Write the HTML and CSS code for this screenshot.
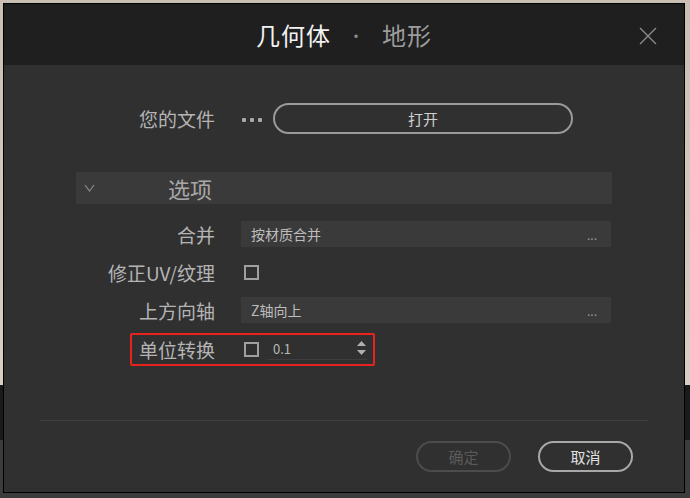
FILE: index.html
```html
<!DOCTYPE html>
<html lang="zh">
<head>
  <meta charset="UTF-8" />
  <title>几何体 · 地形</title>
  <link rel="stylesheet" href="styles.css">
</head>
<body>
  <div class="dialog">
    <div class="header">
      <div class="title">几何体<span class="dot">·</span><span class="sub">地形</span></div>
      <svg class="close" width="18" height="18" viewBox="0 0 18 18">
        <path d="M1 1 L17 17 M17 1 L1 17" stroke="#8a8a8a" stroke-width="1.4" fill="none"/>
      </svg>
    </div>

    <div class="content">
      <div class="row file-row">
        <div class="label">您的文件</div>
        <svg class="dots" width="20" height="6" viewBox="0 0 20 6">
          <rect x="0" y="1" width="4" height="4" rx="1" fill="#a8a8a8"/>
          <rect x="8" y="1" width="4" height="4" rx="1" fill="#a8a8a8"/>
          <rect x="16" y="1" width="4" height="4" rx="1" fill="#a8a8a8"/>
        </svg>
        <button class="pill open">打开</button>
      </div>

      <div class="section">
        <svg class="chev" width="11" height="8" viewBox="0 0 11 8">
          <polyline points="1,1 5.5,7 10,1" stroke="#8a8a8a" stroke-width="1.2" fill="none"/>
        </svg>
        <span class="section-title">选项</span>
      </div>

      <div class="row">
        <div class="label">合并</div>
        <div class="field">按材质合并<span class="more">...</span></div>
      </div>
      <div class="row">
        <div class="label">修正UV/纹理</div>
        <div class="check"></div>
      </div>
      <div class="row">
        <div class="label">上方向轴</div>
        <div class="field">Z轴向上<span class="more">...</span></div>
      </div>
      <div class="row marked">
        <div class="label">单位转换</div>
        <div class="check"></div>
        <div class="number">
          <span>0.1</span>
          <span class="spin">
            <svg width="9" height="15" viewBox="0 0 9 15">
              <polygon points="4.5,0 9,5 0,5" fill="#b0b0b0"/>
              <polygon points="0,9 9,9 4.5,14" fill="#b0b0b0"/>
            </svg>
          </span>
        </div>
      </div>
    </div>

    <div class="sep"></div>

    <div class="footer">
      <button class="pill ok">确定</button>
      <button class="pill cancel">取消</button>
    </div>
  </div>
</body>
</html>
```

FILE: styles.css
```css
*, *::after {
  box-sizing: border-box;
}
body {
  margin: 0;
  width: 690px;
  height: 498px;
  overflow: hidden;
  padding: 3px 0 0 3px;
  font-family: "Noto Sans CJK SC", "Noto Sans", sans-serif;
  background: linear-gradient(to bottom, #c9c0b3 0, #d8cfc2 385px, #1a1a1a 385px, #1a1a1a 440px, #3c3c3c 440px);
}
.dialog {
  width: 682px;
  height: 490px;
  border: 1px solid #000;
  background: #303030;
  display: flex;
  flex-direction: column;
}
.header {
  height: 61px;
  background: #1f1f1f;
  display: flex;
  align-items: center;
  justify-content: center;
  position: relative;
}
.title {
  font-size: 24px;
  color: #f2f2f2;
  letter-spacing: 1px;
}
.title .dot {
  color: #8a8a8a;
  font-size: 16px;
  margin: 0 17px;
  vertical-align: 3px;
}
.title .sub {
  color: #9c9c9c;
}
.close {
  position: absolute;
  right: 27px;
  top: 23px;
}
.content {
  padding-top: 38px;
  height: 337px;
}
.row {
  display: flex;
  align-items: center;
  height: 26px;
  margin-bottom: 12px;
}
.label {
  width: 211px;
  text-align: right;
  font-size: 19px;
  color: #b4b4b4;
  margin-right: 26px;
  white-space: nowrap;
}
.file-row {
  height: 31px;
  margin-bottom: 38px;
}
.dots {
  margin: 2px 11px 0 1px;
}
.pill {
  height: 31px;
  border-radius: 16px;
  background: transparent;
  border: 2px solid #9a9a9a;
  font-family: "Noto Sans CJK SC", sans-serif;
  font-size: 15px;
  color: #d0d0d0;
  padding: 0;
}
.open {
  width: 300px;
}
.section {
  margin-left: 72px;
  width: 536px;
  height: 32px;
  background: #3a3a3a;
  display: flex;
  align-items: center;
  padding-left: 8px;
  margin-bottom: 17px;
}
.section-title {
  font-size: 22px;
  color: #a8a8a8;
  margin-left: 73px;
}
.field {
  width: 370px;
  height: 26px;
  background: #3a3a3a;
  display: flex;
  align-items: center;
  padding: 0 14px 0 10px;
  font-size: 14px;
  color: #bdbdbd;
}
.more {
  margin-left: auto;
  color: #999;
  font-size: 12px;
}
.check {
  width: 15px;
  height: 15px;
  border: 2px solid #a0a0a0;
  margin-left: 3px;
}
.marked {
  position: relative;
  margin-top: 13px;
}
.marked::after {
  content: "";
  position: absolute;
  left: 126px;
  top: -3px;
  width: 245px;
  height: 33px;
  border: 2px solid #e8231f;
  border-radius: 2px;
}
.number {
  width: 100px;
  margin-left: 8px;
  height: 22px;
  border-bottom: 1px solid #3e3e3e;
  display: flex;
  align-items: center;
  font-size: 13px;
  color: #b8b8b8;
  padding-left: 6px;
  padding-right: 1px;
}
.spin {
  margin-left: auto;
  display: flex;
}
.sep {
  height: 1px;
  background: #3e3e3e;
  margin: 18px 36px 0;
}
.footer {
  display: flex;
  justify-content: flex-end;
  gap: 27px;
  padding: 20px 51px 0 0;
}
.footer .pill {
  width: 95px;
}
.ok {
  border-color: #4c4c4c;
  color: #5a5a5a;
}
.cancel {
  border-color: #a8a8a8;
  color: #e0e0e0;
}
```
